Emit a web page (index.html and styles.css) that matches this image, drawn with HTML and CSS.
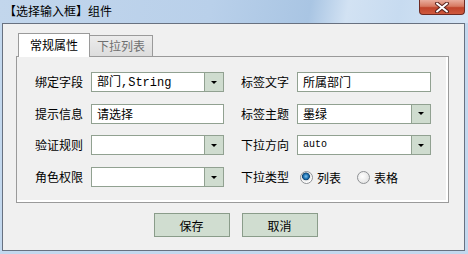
FILE: index.html
```html
<!DOCTYPE html>
<html lang="zh-CN">
<head>
  <meta charset="UTF-8" />
  <title>【选择输入框】组件</title>
  <link rel="stylesheet" href="styles.css">
</head>
<body>
  <div class="window">
    <div class="titlebar">
      <span class="title">【选择输入框】组件</span>
      <button class="close" type="button">
        <svg width="16" height="11" viewBox="0 0 16 11">
          <path d="M3 1.5 L13 9.5 M13 1.5 L3 9.5" stroke="#5a2520" stroke-width="4" stroke-linecap="round"/>
          <path d="M3 1.5 L13 9.5 M13 1.5 L3 9.5" stroke="#fff" stroke-width="2" stroke-linecap="round"/>
        </svg>
      </button>
    </div>

    <div class="client">
      <div class="tabs">
        <div class="tab active">常规属性</div>
        <div class="tab">下拉列表</div>
      </div>

      <div class="panel">
        <div class="form">
          <label>绑定字段</label>
          <div class="combo"><span class="value">部门<span class="mono">,String</span></span><span class="drop"></span></div>
          <label class="right">标签文字</label>
          <div class="field"><span class="value">所属部门</span></div>

          <label>提示信息</label>
          <div class="field"><span class="value">请选择</span></div>
          <label class="right">标签主题</label>
          <div class="combo"><span class="value">墨绿</span><span class="drop"></span></div>

          <label>验证规则</label>
          <div class="combo"><span class="value"></span><span class="drop"></span></div>
          <label class="right">下拉方向</label>
          <div class="combo"><span class="value small-mono">auto</span><span class="drop"></span></div>

          <label>角色权限</label>
          <div class="combo"><span class="value"></span><span class="drop"></span></div>
          <label class="right">下拉类型</label>
          <div class="radios">
            <span class="radio checked"></span><span class="radio-text">列表</span>
            <span class="radio"></span><span class="radio-text">表格</span>
          </div>
        </div>
      </div>

      <div class="actions">
        <button type="button">保存</button>
        <button type="button">取消</button>
      </div>
    </div>
  </div>
</body>
</html>
```

FILE: styles.css
```css
body { margin: 0; width: 468px; height: 254px; overflow: hidden; font-family: "Noto Sans CJK SC", sans-serif; font-size: 12px; color: #000; }
.window { height: 254px; background: #c3d8ee; box-sizing: border-box; }

.titlebar {
  height: 23px; display: flex; justify-content: space-between; align-items: flex-start;
  padding: 0 3px 0 4px; box-sizing: border-box;
  background: linear-gradient(100deg, #c2d6ec 0%, #b9d0ea 45%, #a9c5e3 66%, #d2e2f3 74%, #c7dbf0 85%, #d6e5f5 100%);
}
.title { line-height: 21px; }
.close {
  width: 46px; height: 15px; padding: 0; border: 1px solid #6e2a22; border-top: none;
  border-radius: 0 0 4px 4px; display: flex; align-items: center; justify-content: center;
  background: linear-gradient(#e9ad9d 0%, #d77a62 45%, #c0442b 55%, #cf5a3e 100%);
}

.client {
  height: 228px; margin: 0 3px 0 2px; box-sizing: border-box;
  border: 1px solid #687180; background: #f0f0f0; padding-top: 9px;
}

.tabs { display: flex; align-items: flex-end; height: 24px; margin-left: 15px; }
.tab {
  height: 22px; box-sizing: border-box; border: 1px solid #9a9a9a; border-bottom: none; border-left: none;
  padding: 0 7px; line-height: 20px; color: #6f6f6f; background: linear-gradient(#ececec, #dcdcdc);
}
.tab.active {
  position: relative; z-index: 1; height: 24px; border-left: 1px solid #9a9a9a;
  padding: 0 11px; line-height: 21px; color: #000; background: #fff;
}

.panel {
  position: relative; margin: -1px 0 0 13px; width: 433px; height: 147px; box-sizing: border-box;
  border: 1px solid #9a9a9a; box-shadow: inset -2px -2px 0 #fff; padding: 15px 0 0 18px;
}
.form {
  display: grid; grid-template-columns: 56px 133px 73px 134px;
  grid-auto-rows: 20px; row-gap: 11.7px; align-items: center;
}
.form label { line-height: 20px; }
.form label.right { padding-left: 17px; }

.field, .combo {
  height: 20px; box-sizing: border-box; border: 1px solid #91a191; background: #fff;
  display: flex; align-items: center;
}
.value { flex: 1; padding-left: 5px; line-height: 18px; white-space: nowrap; }
.mono { font-family: "Liberation Mono", monospace; font-size: 12px; }
.small-mono { font-family: "Liberation Mono", monospace; font-size: 10px; }
.drop {
  width: 18px; height: 18px; border-left: 1px solid #91a191; background: #cfdccf;
  display: flex; align-items: center; justify-content: center;
}
.drop::after {
  content: ""; width: 0; height: 0;
  border-left: 3px solid transparent; border-right: 3px solid transparent; border-top: 3px solid #000;
}

.radios { display: flex; align-items: center; padding-left: 3px; }
.radio {
  width: 13px; height: 13px; box-sizing: border-box; border-radius: 50%;
  border: 1px solid #8e9194; background: radial-gradient(circle at 40% 40%, #fff, #dcdcdc);
}
.radio.checked {
  background: radial-gradient(circle at 45% 40%, #7fc3ee 0, #1b6fb0 2.5px, #13456f 3.6px, #e6e6e6 4.2px, #fff 6px);
}
.radio-text { margin: 0 16px 0 4px; }

.actions { display: flex; justify-content: center; gap: 12px; margin-top: 10px; padding-left: 4px; }
.actions button {
  width: 76px; height: 24px; border: 1px solid #8a9c8a; background: #d0ddd0;
  font-family: "Noto Sans CJK SC", sans-serif; font-size: 12px; color: #000; padding: 0;
}
```
